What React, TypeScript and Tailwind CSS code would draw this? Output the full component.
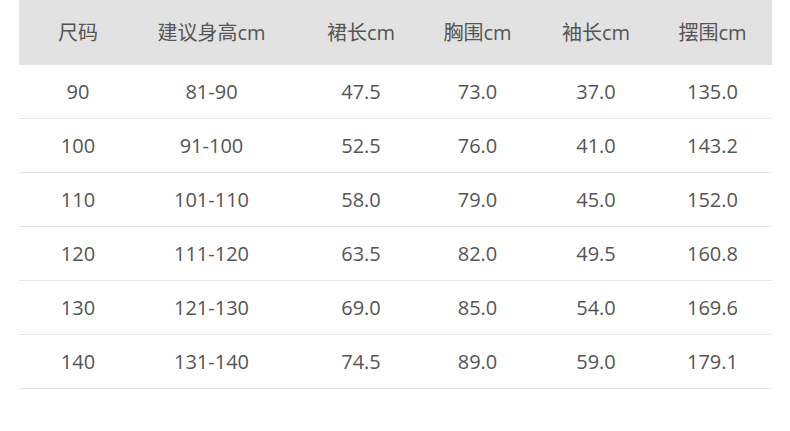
import React from "react";

const headers = ["尺码", "建议身高cm", "裙长cm", "胸围cm", "袖长cm", "摆围cm"];
const rows = [
  ["90", "81-90", "47.5", "73.0", "37.0", "135.0"],
  ["100", "91-100", "52.5", "76.0", "41.0", "143.2"],
  ["110", "101-110", "58.0", "79.0", "45.0", "152.0"],
  ["120", "111-120", "63.5", "82.0", "49.5", "160.8"],
  ["130", "121-130", "69.0", "85.0", "54.0", "169.6"],
  ["140", "131-140", "74.5", "89.0", "59.0", "179.1"],
];

const grid = "grid grid-cols-[118px_149px_150px_83px_154px_79px_1fr] items-center";

export default function App() {
  return (
    <div
      className="w-[790px] h-[431px] bg-white text-[#555555] text-[20px]"
      style={{ fontFamily: '"Open Sans", "Noto Sans CJK SC", sans-serif' }}
    >
      <div className="ml-[19px] w-[753px]">
        <div className={`${grid} h-[65px] bg-[#e2e2e2]`}>
          {headers.map((h) => (
            <div key={h} className="text-center whitespace-nowrap">
              {h}
            </div>
          ))}
          <div />
        </div>
        {rows.map((r, i) => (
          <div key={i} className={`${grid} h-[54px] border-b border-[#e6e6e6]`}>
            {r.map((c, j) => (
              <div key={j} className="text-center whitespace-nowrap">
                {c}
              </div>
            ))}
            <div />
          </div>
        ))}
      </div>
    </div>
  );
}
